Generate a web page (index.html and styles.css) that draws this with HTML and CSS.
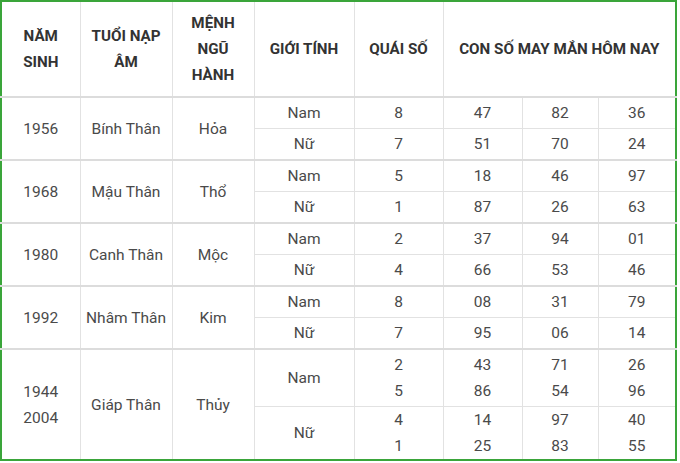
FILE: index.html
```html
<!DOCTYPE html>
<html lang="vi">
<head>
<meta charset="utf-8">
<link rel="stylesheet" href="styles.css">
</head>
<body>
<table class="lucky">
  <colgroup>
    <col class="c1"><col class="c2"><col class="c3"><col class="c4"><col class="c5"><col class="c6"><col class="c7"><col class="c8">
  </colgroup>
  <thead>
    <tr class="head">
      <th>NĂM<br>SINH</th>
      <th>TUỔI NẠP<br>ÂM</th>
      <th>MỆNH<br>NGŨ<br>HÀNH</th>
      <th>GIỚI TÍNH</th>
      <th>QUÁI SỐ</th>
      <th colspan="3">CON SỐ MAY MẮN HÔM NAY</th>
    </tr>
  </thead>
  <tbody>
    <tr class="grp">
      <td rowspan="2">1956</td><td rowspan="2">Bính Thân</td><td rowspan="2">Hỏa</td>
      <td>Nam</td><td>8</td><td>47</td><td>82</td><td>36</td>
    </tr>
    <tr>
      <td>Nữ</td><td>7</td><td>51</td><td>70</td><td>24</td>
    </tr>
    <tr class="grp">
      <td rowspan="2">1968</td><td rowspan="2">Mậu Thân</td><td rowspan="2">Thổ</td>
      <td>Nam</td><td>5</td><td>18</td><td>46</td><td>97</td>
    </tr>
    <tr>
      <td>Nữ</td><td>1</td><td>87</td><td>26</td><td>63</td>
    </tr>
    <tr class="grp">
      <td rowspan="2">1980</td><td rowspan="2">Canh Thân</td><td rowspan="2">Mộc</td>
      <td>Nam</td><td>2</td><td>37</td><td>94</td><td>01</td>
    </tr>
    <tr>
      <td>Nữ</td><td>4</td><td>66</td><td>53</td><td>46</td>
    </tr>
    <tr class="grp">
      <td rowspan="2">1992</td><td rowspan="2">Nhâm Thân</td><td rowspan="2">Kim</td>
      <td>Nam</td><td>8</td><td>08</td><td>31</td><td>79</td>
    </tr>
    <tr>
      <td>Nữ</td><td>7</td><td>95</td><td>06</td><td>14</td>
    </tr>
    <tr class="grp tall1">
      <td rowspan="2" class="multi">1944<br>2004</td><td rowspan="2">Giáp Thân</td><td rowspan="2">Thủy</td>
      <td>Nam</td><td class="multi">2<br>5</td><td class="multi">43<br>86</td><td class="multi">71<br>54</td><td class="multi">26<br>96</td>
    </tr>
    <tr class="tall2">
      <td>Nữ</td><td class="multi">4<br>1</td><td class="multi">14<br>25</td><td class="multi">97<br>83</td><td class="multi">40<br>55</td>
    </tr>
  </tbody>
</table>
</body>
</html>
```

FILE: styles.css
```css
html, body {
  margin: 0;
  padding: 0;
  background: #ffffff;
}

.lucky {
  border-collapse: collapse;
  table-layout: fixed;
  width: 677px;
  border: 2px solid #3aa53a;
  font-family: Roboto, "Liberation Sans", Arial, sans-serif;
  font-size: 15.5px;
  color: #4a4a4a;
}

.c1 { width: 79px; }
.c2 { width: 92px; }
.c3 { width: 82px; }
.c4 { width: 100px; }
.c5 { width: 89px; }
.c6 { width: 79px; }
.c7 { width: 76px; }
.c8 { width: 78px; }

.lucky th,
.lucky td {
  border: 1px solid #e2e2e2;
  text-align: center;
  vertical-align: middle;
  padding: 0;
}

.lucky th {
  font-size: 15.2px;
  font-weight: 700;
  color: #333333;
  line-height: 26px;
}

.head {
  height: 96px;
}

.lucky td {
  height: 30px;
  line-height: 20px;
}

.grp td {
  border-top: 2px solid #dcdcdc;
}

.tall1 td {
  height: 56px;
}

.tall2 td {
  height: 52px;
}

.lucky td.multi {
  line-height: 26px;
}
```
